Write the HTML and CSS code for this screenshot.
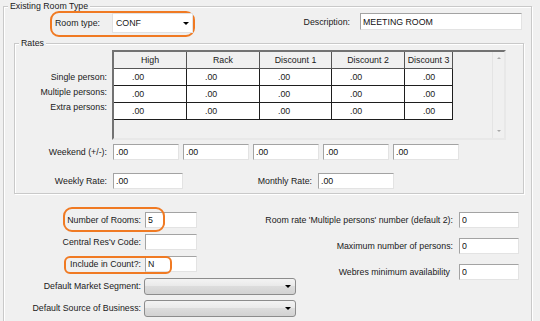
FILE: index.html
```html
<!DOCTYPE html>
<html lang="en">
<head>
  <meta charset="utf-8" />
  <title>Existing Room Type</title>
  <link rel="stylesheet" href="styles.css">
</head>
<body>
  <fieldset class="group outer">
    <legend>Existing Room Type</legend>

    <div class="top-row">
      <div class="mark room-type">
        <label>Room type:</label>
        <div class="combo plain"><span>CONF</span><i class="arrow"></i></div>
      </div>
      <div class="desc">
        <label for="desc">Description:</label>
        <input id="desc" class="txt" value="MEETING ROOM" />
      </div>
    </div>

    <fieldset class="group rates">
      <legend>Rates</legend>

      <div class="grid-row">
        <div class="row-labels">
          <div>Single person:</div>
          <div>Multiple persons:</div>
          <div>Extra persons:</div>
        </div>
        <div class="grid">
          <div class="cells">
            <div class="cell head">High</div>
            <div class="cell head">Rack</div>
            <div class="cell head">Discount 1</div>
            <div class="cell head">Discount 2</div>
            <div class="cell head">Discount 3</div>

            <div class="cell">.00</div><div class="cell">.00</div><div class="cell">.00</div><div class="cell">.00</div><div class="cell">.00</div>
            <div class="cell">.00</div><div class="cell">.00</div><div class="cell">.00</div><div class="cell">.00</div><div class="cell">.00</div>
            <div class="cell">.00</div><div class="cell">.00</div><div class="cell">.00</div><div class="cell">.00</div><div class="cell">.00</div>
          </div>
          <div class="vscroll"><i class="up"></i><i class="down"></i></div>
        </div>
      </div>

      <div class="field-row">
        <label class="lbl">Weekend (+/-):</label>
        <input class="txt wk" value=".00" />
        <input class="txt wk" value=".00" />
        <input class="txt wk" value=".00" />
        <input class="txt wk" value=".00" />
        <input class="txt wk" value=".00" />
      </div>

      <div class="field-row weekly">
        <label class="lbl">Weekly Rate:</label>
        <input class="txt w-weekly" value=".00" />
        <label class="monthly-lbl">Monthly Rate:</label>
        <input class="txt w-monthly" value=".00" />
      </div>
    </fieldset>

    <div class="lower">
      <div class="lower-left">
        <label>Number of Rooms:</label>
        <input class="txt small" value="5" />
        <label>Central Res'v Code:</label>
        <input class="txt small" value="" />
        <label>Include in Count?:</label>
        <input class="txt small" value="N" />
        <label>Default Market Segment:</label>
        <div class="combo btn"><i class="arrow"></i></div>
        <label>Default Source of Business:</label>
        <div class="combo btn"><i class="arrow"></i></div>

        <span class="mark mark-rooms"></span>
        <span class="mark mark-count"></span>
      </div>

      <div class="lower-right">
        <label>Room rate 'Multiple persons' number (default 2):</label>
        <input class="txt num" value="0" />
        <label>Maximum number of persons:</label>
        <input class="txt num" value="0" />
        <label class="webres">Webres minimum availability</label>
        <input class="txt num" value="0" />
      </div>
    </div>
  </fieldset>
</body>
</html>
```

FILE: styles.css
```css
:root {
  --bg:#f0f0f0;
  --line:#c9c9c9;
  --mark:#f07a23;
  --ink:#1a1a1a;
}
body {
  margin:0;
  width:540px;
  height:321px;
  overflow:hidden;
  background:var(--bg);
  font-family:'Liberation Sans',Arial,sans-serif;
  font-size:8.8px;
  color:var(--ink);
}
.group {
  margin:0;
  padding:0;
  min-width:0;
  border:1px solid var(--line);
  box-shadow:inset 1px 1px 0 #fff, 1px 1px 0 #fff;
}
legend {
  margin-left:4px;
  padding:0 2px;
  line-height:12px;
  background:var(--bg);
}
.group.outer {
  margin:0 8px 0 3px;
  height:340px;
}

/* annotation rings */
.mark {
  border:2px solid var(--mark);
  border-radius:9px;
  box-sizing:border-box;
}

.top-row {
  display:flex;
  align-items:flex-start;
}
.room-type {
  display:flex;
  align-items:center;
  width:145px;
  height:26px;
  margin:-1px 0 0 46px;
  padding:0 0 2px 3px;
}
.room-type label {
  width:57px;
}
.combo {
  display:flex;
  align-items:center;
  box-sizing:border-box;
}
.combo.plain {
  width:81px;
  height:20px;
  padding-left:3px;
  background:#fff;
  border:1px solid #e2e2e2;
}
.arrow {
  margin-left:auto;
  margin-right:3px;
  width:0;
  height:0;
  border-left:3px solid transparent;
  border-right:3px solid transparent;
  border-top:3px solid #000;
}
.desc {
  display:flex;
  align-items:center;
  gap:10px;
  margin:1px 9px 0 auto;
}

input.txt {
  box-sizing:border-box;
  height:16px;
  margin:0;
  padding:0 0 0 2px;
  border:1px solid;
  border-color:#a3a3a3 #e3e3e3 #e3e3e3 #a3a3a3;
  background:#fff;
  font:inherit;
  color:#111;
  outline:none;
}
.desc input.txt {
  width:162px;
  height:17px;
}

/* rates */
.group.rates {
  margin:0 7px 0 10px;
  padding:1px 0 4px;
}
.grid-row {
  display:flex;
  align-items:flex-start;
}
.row-labels {
  width:92px;
  padding-top:20px;
  line-height:15px;
  text-align:right;
}
.grid {
  display:flex;
  width:394px;
  height:90px;
  margin-left:5px;
  box-sizing:border-box;
  border:2px solid;
  border-color:#727272 #e8e8e8 #e8e8e8 #727272;
  background:var(--bg);
}
.cells {
  display:grid;
  grid-template-columns:73px 73px 72px 73px 48px;
  grid-auto-rows:17px;
  align-self:flex-start;
}
.cell {
  box-sizing:border-box;
  padding-left:18px;
  line-height:16px;
  background:#fff;
  border-right:1px solid #1e1e1e;
  border-bottom:1px solid #1e1e1e;
}
.cell.head {
  padding:0;
  text-align:center;
  background:var(--bg);
  border-color:#555;
}
.vscroll {
  margin-left:auto;
  width:12px;
  display:flex;
  flex-direction:column;
  justify-content:space-between;
  align-items:center;
  padding:5px 0 6px;
  box-sizing:border-box;
  border-left:1px solid #e4e4e4;
}
.vscroll i {
  width:0;
  height:0;
  border-left:2px solid transparent;
  border-right:2px solid transparent;
}
.vscroll .up {
  border-bottom:2px solid #a8a8a8;
}
.vscroll .down {
  border-top:2px solid #a8a8a8;
}

.field-row {
  display:flex;
  align-items:center;
  gap:4px;
  margin-top:4px;
}
.field-row.weekly {
  margin-top:13px;
}
.lbl {
  width:92px;
  margin-right:2px;
  text-align:right;
}
input.wk {
  width:66px;
}
input.w-weekly {
  width:70px;
}
.monthly-lbl {
  width:125px;
  margin-right:2px;
  text-align:right;
}
input.w-monthly {
  width:76px;
}

/* lower block */
.lower {
  display:flex;
  margin-top:13px;
}
.lower-left {
  position:relative;
  flex:none;
  width:240px;
  display:grid;
  grid-template-columns:137px auto;
  grid-auto-rows:22px;
  column-gap:4px;
  align-items:center;
  padding-top:2px;
}
.lower-left label {
  text-align:right;
  white-space:nowrap;
}
input.small {
  width:52px;
}
.combo.btn {
  width:152px;
  height:17px;
  margin-left:-1px;
  border:1px solid #8c8c8c;
  border-radius:3px;
  background:linear-gradient(#f3f3f3,#e9e9e9 50%,#dcdcdc 50%,#d2d2d2);
}
.combo.btn .arrow {
  margin-right:4px;
}
.mark-rooms {
  position:absolute;
  left:59px;
  top:0;
  width:102px;
  height:25px;
}
.mark-count {
  position:absolute;
  left:60px;
  top:49px;
  width:108px;
  height:18px;
  border-radius:6px;
}
.lower-right {
  display:grid;
  grid-template-columns:auto 60px;
  grid-auto-rows:26px;
  column-gap:6px;
  align-items:center;
  justify-items:end;
  margin:0 12px 0 auto;
}
.lower-right label {
  white-space:nowrap;
}
input.num {
  width:60px;
}
.webres {
  padding-right:3px;
}
```
